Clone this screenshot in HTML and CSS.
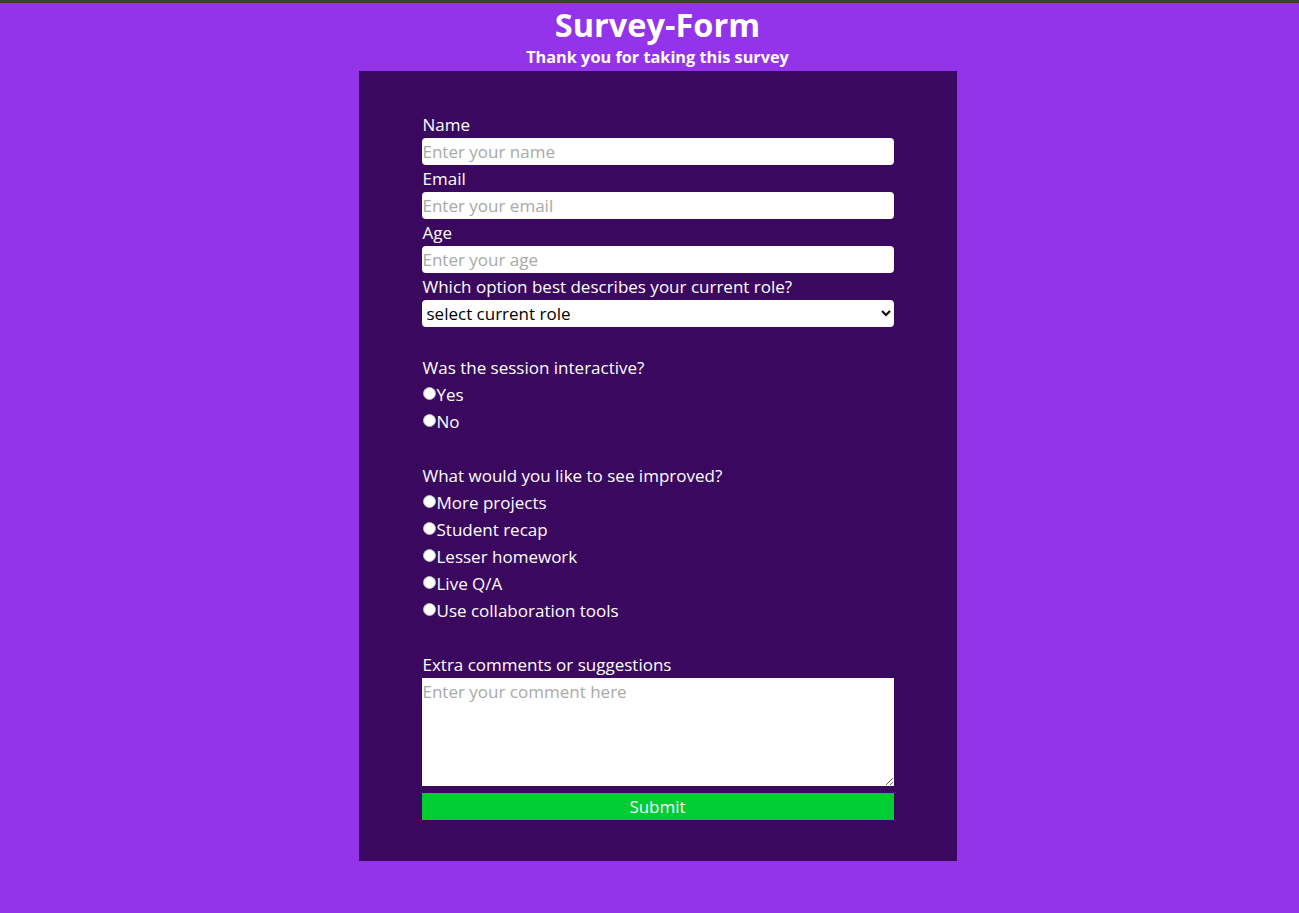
FILE: index.html
```html
<!DOCTYPE html>
<html lang="en">
<head>
<meta charset="utf-8">
<title>Survey-Form</title>
<link rel="stylesheet" href="styles.css">
</head>
<body>
<header class="page-header">
  <h1 class="title" id="title">Survey-Form</h1>
  <p class="subtitle" id="description">Thank you for taking this survey</p>
</header>
<main class="panel">
  <form class="survey" id="survey-form">
    <label class="label" for="name" id="name-label">Name</label>
    <input class="field" type="text" id="name" placeholder="Enter your name">
    <label class="label" for="email" id="email-label">Email</label>
    <input class="field" type="email" id="email" placeholder="Enter your email">
    <label class="label" for="number" id="number-label">Age</label>
    <input class="field" type="number" id="number" placeholder="Enter your age">
    <label class="label" for="dropdown">Which option best describes your current role?</label>
    <select class="field select" id="dropdown">
      <option>select current role</option>
      <option>Student</option>
      <option>Full time job</option>
      <option>Other</option>
    </select>

    <p class="label group-start">Was the session interactive?</p>
    <label class="choice"><input class="radio" type="radio" name="interactive" value="yes">Yes</label>
    <label class="choice"><input class="radio" type="radio" name="interactive" value="no">No</label>

    <p class="label group-start">What would you like to see improved?</p>
    <label class="choice"><input class="radio" type="radio" name="improve" value="projects">More projects</label>
    <label class="choice"><input class="radio" type="radio" name="improve" value="recap">Student recap</label>
    <label class="choice"><input class="radio" type="radio" name="improve" value="homework">Lesser homework</label>
    <label class="choice"><input class="radio" type="radio" name="improve" value="qa">Live Q/A</label>
    <label class="choice"><input class="radio" type="radio" name="improve" value="tools">Use collaboration tools</label>

    <label class="label group-start" for="comments">Extra comments or suggestions</label>
    <textarea class="comments" id="comments" placeholder="Enter your comment here"></textarea>
    <button class="submit" type="submit" id="submit">Submit</button>
  </form>
</main>
</body>
</html>
```

FILE: styles.css
```css
* {
  box-sizing: border-box;
}

html, body {
  margin: 0;
  padding: 0;
}

body {
  background: #9333ea;
  border-top: 3px solid #3d3d3f;
  padding-left: 16px;
  font-family: "Open Sans", "Noto Sans", sans-serif;
  color: #ffffff;
  min-height: 913px;
}

.page-header {
  text-align: center;
  padding-top: 3px;
}

.title {
  margin: 0;
  font-size: 32.5px;
  line-height: 38px;
  font-weight: 700;
}

.subtitle {
  margin: 2px 0 0;
  font-size: 16.3px;
  line-height: 22px;
  font-weight: 700;
}

.panel {
  width: 598px;
  margin: 3px auto 0;
  background: #3b0860;
  padding: 40px 63px 41px 63px;
}

.survey {
  display: flex;
  flex-direction: column;
}

.label {
  margin: 0;
  display: block;
  font-size: 17px;
  line-height: 27px;
  padding-left: 1px;
}

.group-start {
  margin-top: 27px;
}

.field {
  height: 27px;
  width: 100%;
  border: none;
  border-radius: 4px;
  background: #ffffff;
  font-family: inherit;
  font-size: 17px;
  padding: 0 1px;
  margin: 0;
  color: #000;
  outline: none;
}

.field::placeholder,
.comments::placeholder {
  color: #a9a9a9;
}

.select {
  padding: 0 6px 0 1px;
}

.choice {
  display: flex;
  align-items: center;
  font-size: 17px;
  line-height: 27px;
  padding-left: 1px;
}

.radio {
  appearance: none;
  -webkit-appearance: none;
  width: 13px;
  height: 13px;
  margin: 0 1px 3px 0;
  border-radius: 50%;
  background: #ffffff;
  border: 1px solid #b8b8b8;
  flex: none;
}

.comments {
  height: 108px;
  width: 100%;
  border: none;
  border-radius: 0;
  margin: 0;
  padding: 0 1px;
  font-family: inherit;
  font-size: 17px;
  line-height: 27px;
  resize: both;
  outline: none;
}

.submit {
  margin-top: 7px;
  height: 27px;
  width: 100%;
  border: none;
  background: #00cc33;
  color: #ffffff;
  font-family: inherit;
  font-size: 17px;
  padding: 0;
  cursor: pointer;
}
```
